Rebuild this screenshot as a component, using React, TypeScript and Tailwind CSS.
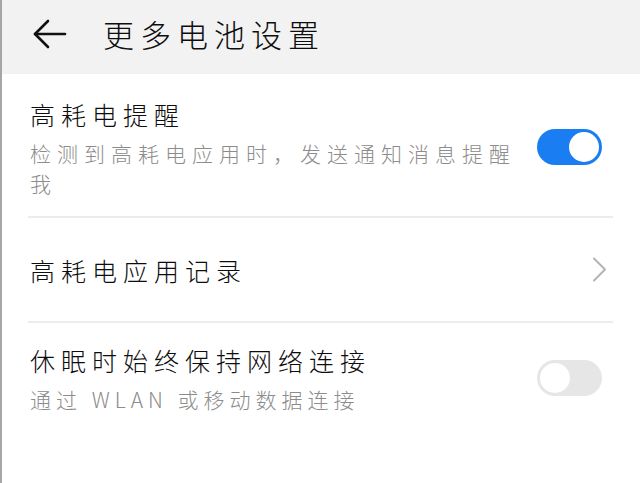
import React, { useState } from 'react'

const cjk = { fontFamily: '"Noto Sans CJK SC", "Noto Sans", sans-serif' }

function Toggle({ on, onChange }: { on: boolean; onChange: (v: boolean) => void }) {
  return (
    <button
      type="button"
      role="switch"
      aria-checked={on}
      onClick={() => onChange(!on)}
      className={`flex h-[36px] w-[65px] flex-shrink-0 items-center rounded-full p-[3px] ${
        on ? 'justify-end bg-[#1a7ef2]' : 'justify-start bg-[#e6e6e6]'
      }`}
    >
      <span className="block h-[30px] w-[30px] rounded-full bg-white" />
    </button>
  )
}

function Divider() {
  return <div className="ml-[26px] mr-[27px] h-[2px] bg-[#ececec]" />
}

export default function App() {
  const [alert, setAlert] = useState(true)
  const [keepAlive, setKeepAlive] = useState(false)

  return (
    <div className="flex h-[483px] w-[640px] flex-col border-l-2 border-[#a6a6a6] bg-white" style={cjk}>
      {/* Header */}
      <div className="flex h-[74px] flex-shrink-0 items-center bg-[#f2f2f2] pb-[6px] pl-[31px]">
        <svg width="34" height="30" viewBox="0 0 34 30" fill="none" stroke="#111" strokeWidth="2.6" strokeLinecap="round" strokeLinejoin="round">
          <path d="M2 15h30" />
          <path d="M15 2L2 15l13 13" />
        </svg>
        <h1 className="ml-[36px] text-[31px] font-light leading-[36px] tracking-[6px] text-[#0d0d0d]">更多电池设置</h1>
      </div>

      {/* High power alert */}
      <div className="flex items-center pl-[28px] pr-[38px] pt-[22px] pb-[18px]">
        <div className="w-[492px]">
          <div className="text-[25px] font-light leading-[36px] tracking-[6px] text-[#0d0d0d]">高耗电提醒</div>
          <div className="mt-[6px] text-[21px] font-light leading-[30px] tracking-[6px] text-[#8c8c8c]">
            检测到高耗电应用时，发送通知消息提醒我
          </div>
        </div>
        <div className="ml-auto">
          <Toggle on={alert} onChange={setAlert} />
        </div>
      </div>

      <Divider />

      {/* Records */}
      <div className="flex h-[103px] items-center pl-[28px] pr-[33px]">
        <div className="text-[25px] font-light leading-[36px] tracking-[6px] text-[#0d0d0d]">高耗电应用记录</div>
        <svg className="ml-auto" width="15" height="25" viewBox="0 0 15 25" fill="none" stroke="#b3b3b3" strokeWidth="2" strokeLinecap="round" strokeLinejoin="round">
          <path d="M2 1.5l11 11-11 11" />
        </svg>
      </div>

      <Divider />

      {/* Keep network on while sleeping */}
      <div className="flex items-center pl-[28px] pr-[38px] pt-[19px] pb-[18px]">
        <div className="w-[492px]">
          <div className="text-[25px] font-light leading-[36px] tracking-[6px] text-[#0d0d0d]">休眠时始终保持网络连接</div>
          <div className="mt-[6px] text-[21px] font-light leading-[30px] tracking-[5px] text-[#8c8c8c]">
            通过 WLAN 或移动数据连接
          </div>
        </div>
        <div className="ml-auto">
          <Toggle on={keepAlive} onChange={setKeepAlive} />
        </div>
      </div>
    </div>
  )
}
